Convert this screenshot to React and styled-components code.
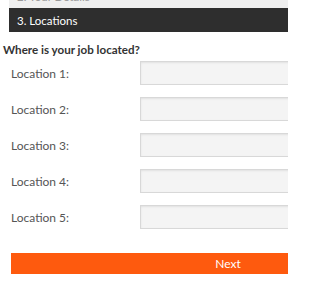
import React from 'react';
import styled, { createGlobalStyle } from 'styled-components';

const GlobalStyle = createGlobalStyle`
  html, body {
    margin: 0;
    padding: 0;
    background: #fff;
    overflow: hidden;
  }
  body {
    font-family: Lato, "Open Sans", sans-serif;
    color: #333;
  }
`;

const Page = styled.div`
  width: 288px;
  height: 288px;
  overflow: hidden;
`;

// the page is scrolled a little: only the bottom of the previous step shows
const Scroller = styled.div`
  margin-top: -16px;
`;

const StepBar = styled.div`
  margin-left: 9px;
  width: 480px;
  height: 24px;
  padding-left: 8px;
  box-sizing: border-box;
  display: flex;
  align-items: center;
  font-size: 11.5px;
  background: ${p => (p.active ? '#2e2e2e' : '#efefef')};
  color: ${p => (p.active ? '#fff' : '#999')};
`;

const Form = styled.form`
  padding: 10px 0 0 3px;
`;

const Heading = styled.h3`
  margin: 0 0 3px;
  font-size: 11.6px;
  font-weight: 700;
  color: #333;
  line-height: 16px;
`;

const Rows = styled.div`
  display: flex;
  flex-direction: column;
  gap: 12px;
`;

const Row = styled.div`
  display: grid;
  grid-template-columns: 129px 300px;
  align-items: center;
  padding-left: 8px;
`;

const Label = styled.label`
  font-size: 12px;
  color: #555;
`;

const Input = styled.input`
  height: 24px;
  box-sizing: border-box;
  border: 1px solid #d8d8d8;
  background: #f4f4f4;
  box-shadow: inset 0 1px 2px rgba(0, 0, 0, 0.08);
  outline: none;
  padding: 0 6px;
  font: inherit;
`;

const Button = styled.button`
  display: block;
  margin: 24px 0 0 8px;
  width: 434px;
  height: 21px;
  border: none;
  background: #fe5a0e;
  color: #fff;
  font-family: Lato, sans-serif;
  font-size: 12px;
  padding: 0;
  cursor: pointer;
`;

export default function App() {
  const locations = [1, 2, 3, 4, 5];
  return (
    <Page>
      <GlobalStyle />
      <Scroller>
        <StepBar>2. Your Details</StepBar>
        <StepBar active>3. Locations</StepBar>
        <Form onSubmit={e => e.preventDefault()}>
          <Heading>Where is your job located?</Heading>
          <Rows>
            {locations.map(n => (
              <Row key={n}>
                <Label htmlFor={`loc${n}`}>Location {n}:</Label>
                <Input id={`loc${n}`} type="text" />
              </Row>
            ))}
          </Rows>
          <Button type="submit">Next</Button>
        </Form>
      </Scroller>
    </Page>
  );
}
